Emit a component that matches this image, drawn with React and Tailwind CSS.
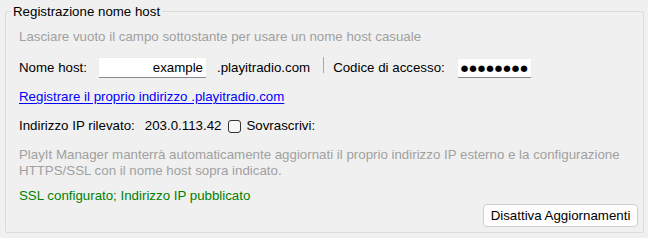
export default function App() {
  return (
    <div
      className="w-[648px] h-[238px] bg-[#f0f0f0] text-[13.3px] leading-[16px] text-black overflow-hidden"
      style={{ fontFamily: '"Liberation Sans", Arial, sans-serif' }}
    >
      <fieldset className="ml-[5px] mt-[4px] w-[639px] h-[229px] border border-[#dcdcdc] rounded-[2px] px-0">
        <legend className="ml-[5px] px-[2px] text-[13.3px] leading-[15px]">Registrazione nome host</legend>

        <div className="pl-[13px] pr-[5px] flex flex-col">
          <p className="mt-[10px] h-[16px] text-[#a0a0a0]">
            Lasciare vuoto il campo sottostante per usare un nome host casuale
          </p>

          <div className="mt-[12px] h-[21px] flex items-center">
            <span className="w-[79px]">Nome host:</span>
            <div className="w-[109px] h-[21px] bg-white border border-[#ececec] border-b-[#8a8a8a] rounded-[2px] flex items-center justify-end pr-[3px]">
              example
            </div>
            <span className="ml-[10px]">.playitradio.com</span>
            <div className="ml-[13px] w-[1px] h-[16px] bg-[#a8a8a8] self-start" />
            <span className="ml-[9px]">Codice di accesso:</span>
            <div className="ml-[12px] w-[75px] h-[20px] bg-white border border-[#ececec] border-b-[#8a8a8a] rounded-[2px] flex items-center pl-[3px]">
              <span className="text-[8.6px] leading-[10px] tracking-[1px]" style={{ fontFamily: '"DejaVu Sans", sans-serif' }}>
                ●●●●●●●●
              </span>
            </div>
          </div>

          <a href="#" className="mt-[11px] h-[16px] text-[#0000ff] underline underline-offset-[2px] self-start">
            Registrare il proprio indirizzo .playitradio.com
          </a>

          <div className="mt-[13px] h-[16px] flex items-center">
            <span>Indirizzo IP rilevato:</span>
            <span className="ml-[10px]">203.0.113.42</span>
            <span className="ml-[7px] w-[13px] h-[13px] border border-[#333333] rounded-[3px] bg-[#f7f7f7]" />
            <span className="ml-[5px]">Sovrascrivi:</span>
          </div>

          <p className="mt-[13px] text-[#a0a0a0] leading-[16px]">
            PlayIt Manager manterrà automaticamente aggiornati il proprio indirizzo IP esterno e la configurazione
            <br />
            HTTPS/SSL con il nome host sopra indicato.
          </p>

          <p className="mt-[9px] h-[16px] text-[#008000]">SSL configurato; Indirizzo IP pubblicato</p>

          <div className="flex justify-end">
            <button className="w-[155px] h-[23px] bg-[#fdfdfd] border border-[#d0d0d0] rounded-[4px] text-black">
              Disattiva Aggiornamenti
            </button>
          </div>
        </div>
      </fieldset>
    </div>
  );
}
